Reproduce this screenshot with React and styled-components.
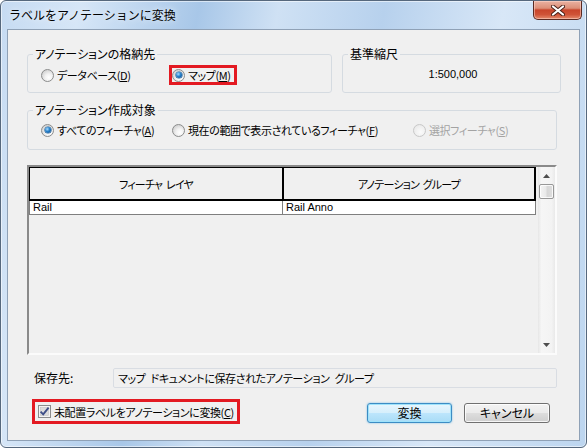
import React from 'react';
import styled, { createGlobalStyle, css } from 'styled-components';

const jp = `"Noto Sans CJK JP", "Noto Sans", sans-serif`;

const GlobalStyle = createGlobalStyle`
  html, body { margin: 0; padding: 0; background: #fff; }
  body { font-family: ${jp}; font-size: 12px; color: #000; }
  * { box-sizing: border-box; }
`;

const Window = styled.div`
  width: 587px;
  height: 448px;
  display: flex;
  flex-direction: column;
  border: 1px solid #56687d;
  border-radius: 6px;
  overflow: hidden;
  background: linear-gradient(100deg, #c6dbf2 0%, #d6e6f7 12%, #a8c7e8 30%, #cfe1f4 42%, #b7d1ed 58%, #d8e7f7 76%, #bcd5ef 100%);
  box-shadow: inset 0 0 0 1px rgba(255, 255, 255, 0.55);
`;

const TitleBar = styled.div`
  height: 28px;
  flex-shrink: 0;
  display: flex;
  justify-content: space-between;
  align-items: flex-start;
  padding: 0 4px 0 8px;
`;

const Title = styled.div`
  margin-top: 7px;
  font: 12px/14px ${jp};
  text-shadow: 0 0 6px rgba(255, 255, 255, 0.9);
`;

const CloseButton = styled.div`
  width: 49px;
  height: 19px;
  display: flex;
  align-items: center;
  justify-content: center;
  border: 1px solid #5a2a22;
  border-top: none;
  border-radius: 0 0 5px 5px;
  background: linear-gradient(#eab2a2 0%, #dc8f78 40%, #c9452b 50%, #cf5337 75%, #e48a6c 100%);
  box-shadow: inset 0 0 0 1px rgba(255, 220, 210, 0.5);
`;

const Client = styled.div`
  flex: 1;
  margin: 0 6px 6px;
  border: 1px solid #8fa1b6;
  background: #f0f0f0;
  display: flex;
  flex-direction: column;
  align-items: flex-start;
  padding: 17px 0 0 19px;
`;

const TopRow = styled.div`
  display: flex;
  gap: 10px;
`;

const Group = styled.fieldset`
  margin: ${p => p.m || 0};
  width: ${p => p.w}px;
  min-width: 0;
  padding: 0 5px;
  border: 1px solid #d5dbe1;
  border-radius: 3px;
`;

const Legend = styled.legend`
  padding: 0 2px;
  font: 12px/14px ${jp};
  font-feature-settings: "palt";
`;

const GroupRow = styled.div`
  display: flex;
  align-items: center;
  height: 20px;
  margin: ${p => p.m};
  padding-left: ${p => (p.center ? 0 : 8)}px;
  justify-content: ${p => (p.center ? 'center' : 'flex-start')};
`;

const ScaleText = styled.span`
  font: 11px/14px "Liberation Sans", sans-serif;
  margin-top: -3px;
  margin-left: 3px;
`;

const uiText = css`
  font: 11px/16px ${jp};
  letter-spacing: -0.4px;
  word-spacing: 3px;
  font-feature-settings: "palt";
  white-space: nowrap;
`;

const Option = styled.label`
  display: flex;
  align-items: center;
  gap: 3px;
  flex-shrink: 0;
  width: ${p => (p.w ? `${p.w}px` : 'auto')};
  color: ${p => (p.disabled ? '#a3a3a3' : '#000')};
  ${uiText}
`;

const RadioMark = styled.span`
  position: relative;
  width: 13px;
  height: 13px;
  flex-shrink: 0;
  border-radius: 50%;
  border: 1px solid ${p => (p.disabled ? '#c8c8c8' : '#8b8c8c')};
  background: ${p =>
    p.disabled
      ? 'radial-gradient(circle at 60% 65%, #fbfbfb, #eeeeee 60%, #e2e2e2)'
      : 'radial-gradient(circle at 62% 68%, #ffffff 0%, #f2f2f2 35%, #d6d6d6 72%, #c6c6c6 100%)'};
  ${p =>
    p.checked &&
    css`
      &::after {
        content: '';
        position: absolute;
        left: 2.5px;
        top: 2.5px;
        width: 6px;
        height: 6px;
        border-radius: 50%;
        background: radial-gradient(circle at 38% 35%, #a9dcff 0%, #237fc9 45%, #0b4585 100%);
        box-shadow: 0 0 0 0.6px #1b5a93;
      }
    `}
`;

const Highlight = styled.span`
  display: flex;
  align-items: center;
  flex-shrink: 0;
  width: ${p => p.w}px;
  height: ${p => p.h}px;
  margin-left: ${p => p.ml || 0}px;
  border: 3px solid #e31a22;
  padding-left: ${p => p.pl || 0}px;
  overflow: hidden;
`;

const Table = styled.div`
  margin-top: 15px;
  width: 530px;
  height: 190px;
  display: flex;
  border-style: solid;
  border-width: 2px;
  border-color: #8a8a8a #fbfbfb #fbfbfb #8a8a8a;
`;

const Grid = styled.div`
  flex: 1;
  display: flex;
  flex-direction: column;
  background: #f0f0f0;
`;

const TableRow = styled.div`
  display: flex;
`;

const HeaderCell = styled.div`
  width: ${p => p.w}px;
  height: 34px;
  display: flex;
  align-items: center;
  justify-content: center;
  border: 1px solid #000;
  border-bottom-width: 2px;
  border-right-width: ${p => (p.last ? 2 : 1)}px;
  background: #f0f0f0;
  font: 11px/14px ${jp};
  letter-spacing: -0.8px;
  word-spacing: 2px;
  font-feature-settings: "palt";
  white-space: pre;
`;

const DataCell = styled.div`
  width: ${p => p.w}px;
  height: 14px;
  background: #fff;
  border: 1px solid #7f7f7f;
  border-top: none;
  border-left-width: ${p => (p.first ? 1 : 0)}px;
  padding-left: 3px;
  font: 11px/13px "Liberation Sans", sans-serif;
`;

const ScrollBar = styled.div`
  width: 17px;
  display: flex;
  flex-direction: column;
  align-items: center;
  background: linear-gradient(90deg, #e6e6e6 0%, #f6f6f6 20%, #f3f3f3 80%, #e9e9e9 100%);
`;

const ScrollArrow = styled.div`
  width: 17px;
  height: 17px;
  flex-shrink: 0;
  display: flex;
  align-items: center;
  justify-content: center;
`;

const Thumb = styled.div`
  width: 15px;
  height: 15px;
  border: 1px solid #979797;
  border-radius: 2px;
  background: linear-gradient(90deg, #f4f4f4 0%, #e9e9e9 45%, #d7d7d7 55%, #dedede 100%);
  box-shadow: inset 0 0 0 1px rgba(255, 255, 255, 0.8);
`;

const Spacer = styled.div`
  flex: 1;
`;

const SaveRow = styled.div`
  margin-top: 13px;
  width: 530px;
  display: flex;
  align-items: center;
`;

const FieldLabel = styled.span`
  width: 86px;
  padding-left: 7px;
  font: 12px/16px ${jp};
  font-feature-settings: "palt";
`;

const TextBox = styled.div`
  width: 444px;
  height: 20px;
  display: flex;
  align-items: center;
  padding-left: 4px;
  border: 1px solid #d9dde3;
  border-radius: 2px;
  background: #f0f0f0;
  ${uiText}
`;

const BottomRow = styled.div`
  margin-top: 11px;
  width: 530px;
  display: flex;
  align-items: center;
`;

const CheckText = styled.span`
  margin-left: 3px;
  ${uiText}
`;

const Buttons = styled.div`
  margin-left: auto;
  margin-right: 7px;
  display: flex;
  gap: 12px;
  margin-top: 2px;
`;

const Button = styled.button`
  width: ${p => p.w}px;
  height: 20px;
  padding: 0;
  border-radius: 3px;
  font: 12px/14px ${jp};
  font-feature-settings: "palt";
  color: #000;
  border: 1px solid ${p => (p.primary ? '#3c8cc4' : '#707070')};
  background: ${p =>
    p.primary
      ? 'linear-gradient(#e8f6fd 0%, #d6effc 48%, #bce5fc 52%, #a9dcf6 100%)'
      : 'linear-gradient(#f3f3f3 0%, #ebebeb 48%, #dddddd 52%, #cfcfcf 100%)'};
  box-shadow: ${p =>
    p.primary
      ? 'inset 0 0 0 1px #9fe3fb, 0 0 2px rgba(60, 170, 230, 0.7)'
      : 'inset 0 0 0 1px rgba(255, 255, 255, 0.8)'};
`;

const CheckSvg = styled.svg`
  flex-shrink: 0;
`;

const Radio = ({ checked, disabled, w, children }) => (
  <Option w={w} disabled={disabled}>
    <RadioMark checked={checked} disabled={disabled} />
    <span>{children}</span>
  </Option>
);

const CheckBox = () => (
  <CheckSvg width="13" height="13" viewBox="0 0 13 13">
    <rect x="0.5" y="0.5" width="12" height="12" fill="#f4f4f4" stroke="#8b8c8c" />
    <rect x="2.5" y="2.5" width="8" height="8" fill="#dcdcdc" stroke="#c3c3c3" strokeWidth="0.6" />
    <path d="M2.6 6.6 L5.2 9.4 L10.6 2.6" fill="none" stroke="#3e4f88" strokeWidth="1.9" />
  </CheckSvg>
);

const Arrow = ({ down }) => (
  <svg width="7" height="4" viewBox="0 0 7 4">
    <path d={down ? 'M0 0 L7 0 L3.5 4 Z' : 'M0 4 L3.5 0 L7 4 Z'} fill="#4e4e4e" />
  </svg>
);

export default function App() {
  return (
    <>
      <GlobalStyle />
      <Window>
        <TitleBar>
          <Title>ラベルをアノテーションに変換</Title>
          <CloseButton>
            <svg width="14" height="11" viewBox="0 0 14 11">
              <path d="M2 1.5 L12 9.5 M12 1.5 L2 9.5" stroke="#4a2018" strokeWidth="4" strokeLinecap="round" />
              <path d="M2 1.5 L12 9.5 M12 1.5 L2 9.5" stroke="#fff" strokeWidth="2.2" strokeLinecap="round" />
            </svg>
          </CloseButton>
        </TitleBar>
        <Client>
          <TopRow>
            <Group w={305}>
              <Legend>アノテーションの格納先</Legend>
              <GroupRow m="4px 0 7px">
                <Radio w={128}>データベース(<u>D</u>)</Radio>
                <Highlight w={68} h={20}>
                  <Radio checked>マップ(<u>M</u>)</Radio>
                </Highlight>
              </GroupRow>
            </Group>
            <Group w={219}>
              <Legend>基準縮尺</Legend>
              <GroupRow m="4px 0 7px" center>
                <ScaleText>1:500,000</ScaleText>
              </GroupRow>
            </Group>
          </TopRow>
          <Group w={530} m="10px 0 0">
            <Legend>アノテーション作成対象</Legend>
            <GroupRow m="3px 0 9px">
              <Radio w={131} checked>すべてのフィーチャ(<u>A</u>)</Radio>
              <Radio w={241}>現在の範囲で表示されているフィーチャ(<u>F</u>)</Radio>
              <Radio disabled>選択フィーチャ(<u>S</u>)</Radio>
            </GroupRow>
          </Group>
          <Table>
            <Grid>
              <TableRow>
                <HeaderCell w={254}>フィーチャ レイヤ</HeaderCell>
                <HeaderCell w={253} last>アノテーション グループ</HeaderCell>
              </TableRow>
              <TableRow>
                <DataCell w={254} first>Rail</DataCell>
                <DataCell w={253}>Rail Anno</DataCell>
              </TableRow>
            </Grid>
            <ScrollBar>
              <ScrollArrow><Arrow /></ScrollArrow>
              <Thumb />
              <Spacer />
              <ScrollArrow><Arrow down /></ScrollArrow>
            </ScrollBar>
          </Table>
          <SaveRow>
            <FieldLabel>保存先:</FieldLabel>
            <TextBox>マップ ドキュメントに保存されたアノテーション グループ</TextBox>
          </SaveRow>
          <BottomRow>
            <Highlight w={208} h={25} ml={5} pl={3}>
              <CheckBox />
              <CheckText>未配置ラベルをアノテーションに変換(<u>C</u>)</CheckText>
            </Highlight>
            <Buttons>
              <Button w={85} primary>変換</Button>
              <Button w={86}>キャンセル</Button>
            </Buttons>
          </BottomRow>
        </Client>
      </Window>
    </>
  );
}
